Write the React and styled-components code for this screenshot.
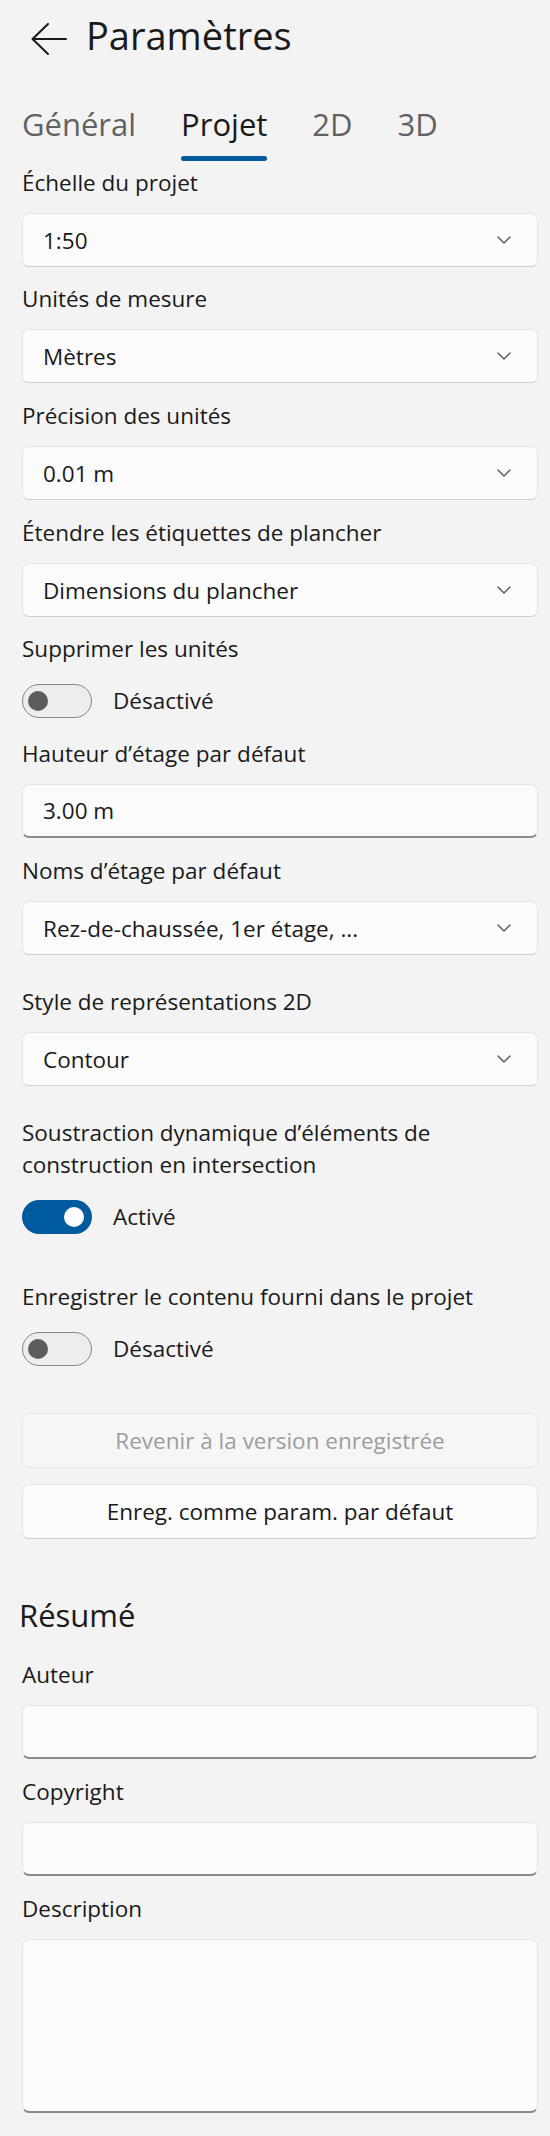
import React from "react";
import styled, { createGlobalStyle } from "styled-components";

const GlobalStyle = createGlobalStyle`
  html, body {
    margin: 0;
    padding: 0;
    background: #f3f3f3;
  }
  body {
    font-family: "Open Sans", "Noto Sans", sans-serif;
    color: #1a1a1a;
  }
`;

const Page = styled.div`
  width: 550px;
  min-height: 2136px;
  box-sizing: border-box;
  padding: 10px 12px 24px 22px;
  background: #f3f3f3;
`;

const Header = styled.header`
  display: flex;
  align-items: flex-start;
  gap: 19px;
  padding-left: 9px;
`;

const BackArrow = styled.svg`
  margin-top: 13px;
  flex-shrink: 0;
`;

const Title = styled.h1`
  margin: 0;
  font-size: 38px;
  line-height: 50px;
  font-weight: 400;
  color: #1a1a1a;
`;

const Tabs = styled.nav`
  display: flex;
  gap: 45px;
  margin-top: 44px;
`;

const Tab = styled.div`
  display: inline-flex;
  flex-direction: column;
  font-size: 31px;
  line-height: 40px;
  color: ${(p) => (p.$active ? "#1a1a1a" : "#626262")};

  &::after {
    content: "";
    height: 5px;
    margin-top: 12px;
    border-radius: 3px;
    background: ${(p) => (p.$active ? "#005a9e" : "transparent")};
  }
`;

const Field = styled.div`
  display: flex;
  flex-direction: column;
  margin-top: ${(p) => p.$space ?? 16}px;
`;

const Label = styled.div`
  font-size: 22.5px;
  line-height: 32px;
  color: #1a1a1a;
`;

const Select = styled.div`
  display: flex;
  align-items: center;
  justify-content: space-between;
  box-sizing: border-box;
  height: 54px;
  margin-top: 14px;
  padding: 0 26px 0 20px;
  background: #fbfbfb;
  border: 1px solid #e5e5e5;
  border-bottom-color: #cfcfcf;
  border-radius: 7px;
  font-size: 22.5px;
  color: #1a1a1a;
`;

const TextBox = styled.div`
  box-sizing: border-box;
  height: ${(p) => p.$height ?? 54}px;
  margin-top: 14px;
  padding: 0 20px;
  display: flex;
  align-items: ${(p) => (p.$multi ? "flex-start" : "center")};
  background: #fbfbfb;
  border: 1px solid #e5e5e5;
  border-bottom: 2px solid #8a8a8a;
  border-radius: 7px;
  font-size: 22.5px;
  color: #1a1a1a;
`;

const ToggleRow = styled.div`
  display: flex;
  align-items: center;
  gap: 21px;
  margin-top: 19px;
  font-size: 22.5px;
  line-height: 32px;
`;

const Track = styled.div`
  box-sizing: border-box;
  width: 70px;
  height: 34px;
  border-radius: 17px;
  display: flex;
  align-items: center;
  justify-content: ${(p) => (p.$on ? "flex-end" : "flex-start")};
  padding: 0 ${(p) => (p.$on ? "8px" : "5px")};
  background: ${(p) => (p.$on ? "#005a9e" : "#ededed")};
  border: ${(p) => (p.$on ? "none" : "1.5px solid #868686")};
`;

const Knob = styled.span`
  width: 20px;
  height: 20px;
  border-radius: 50%;
  background: ${(p) => (p.$on ? "#ffffff" : "#5c5c5c")};
`;

const Button = styled.div`
  box-sizing: border-box;
  height: 55px;
  margin-top: ${(p) => p.$space ?? 16}px;
  display: flex;
  align-items: center;
  justify-content: center;
  border-radius: 7px;
  font-size: 22.5px;
  background: ${(p) => (p.$disabled ? "#f6f6f6" : "#fbfbfb")};
  border: 1px solid #e5e5e5;
  border-bottom-color: ${(p) => (p.$disabled ? "#e5e5e5" : "#cfcfcf")};
  color: ${(p) => (p.$disabled ? "#9d9d9d" : "#1a1a1a")};
`;

const SectionTitle = styled.h2`
  margin: 56px 0 0 -3px;
  font-size: 31px;
  line-height: 40px;
  font-weight: 400;
  color: #1a1a1a;
`;

const Chevron = () => (
  <svg width="14" height="8" viewBox="0 0 14 8" fill="none">
    <path d="M1 1 L7 7 L13 1" stroke="#5f5f5f" strokeWidth="1.5" strokeLinecap="round" strokeLinejoin="round" />
  </svg>
);

function Dropdown({ label, value, space }) {
  return (
    <Field $space={space}>
      <Label>{label}</Label>
      <Select>
        <span>{value}</span>
        <Chevron />
      </Select>
    </Field>
  );
}

function Toggle({ label, on, space }) {
  return (
    <Field $space={space}>
      <Label>{label}</Label>
      <ToggleRow>
        <Track $on={on}>
          <Knob $on={on} />
        </Track>
        <span>{on ? "Activé" : "Désactivé"}</span>
      </ToggleRow>
    </Field>
  );
}

function Input({ label, value, space, height, multi }) {
  return (
    <Field $space={space}>
      <Label>{label}</Label>
      <TextBox $height={height} $multi={multi}>
        {value}
      </TextBox>
    </Field>
  );
}

export default function App() {
  return (
    <Page>
      <GlobalStyle />
      <Header>
        <BackArrow width="36" height="32" viewBox="0 0 36 32" fill="none">
          <path d="M1.5 16 H35 M17 1 L1.5 16 L17 31" stroke="#1a1a1a" strokeWidth="2" strokeLinecap="round" strokeLinejoin="round" />
        </BackArrow>
        <Title>Paramètres</Title>
      </Header>

      <Tabs>
        <Tab>Général</Tab>
        <Tab $active>Projet</Tab>
        <Tab>2D</Tab>
        <Tab>3D</Tab>
      </Tabs>

      <Dropdown space={6} label="Échelle du projet" value="1:50" />
      <Dropdown label="Unités de mesure" value="Mètres" />
      <Dropdown space={17} label="Précision des unités" value="0.01 m" />
      <Dropdown space={17} label="Étendre les étiquettes de plancher" value="Dimensions du plancher" />
      <Toggle label="Supprimer les unités" on={false} />
      <Input space={20} label="Hauteur d’étage par défaut" value="3.00 m" />
      <Dropdown space={17} label="Noms d’étage par défaut" value="Rez-de-chaussée, 1er étage, ..." />
      <Dropdown space={31} label="Style de représentations 2D" value="Contour" />
      <Toggle
        space={31}
        label={
          <>
            Soustraction dynamique d’éléments de
            <br />
            construction en intersection
          </>
        }
        on
      />
      <Toggle space={47} label="Enregistrer le contenu fourni dans le projet" on={false} />

      <Button $disabled $space={47}>Revenir à la version enregistrée</Button>
      <Button>Enreg. comme param. par défaut</Button>

      <SectionTitle>Résumé</SectionTitle>
      <Input space={24} label="Auteur" value="" />
      <Input space={17} label="Copyright" value="" />
      <Input space={17} label="Description" value="" height={174} multi />
    </Page>
  );
}
